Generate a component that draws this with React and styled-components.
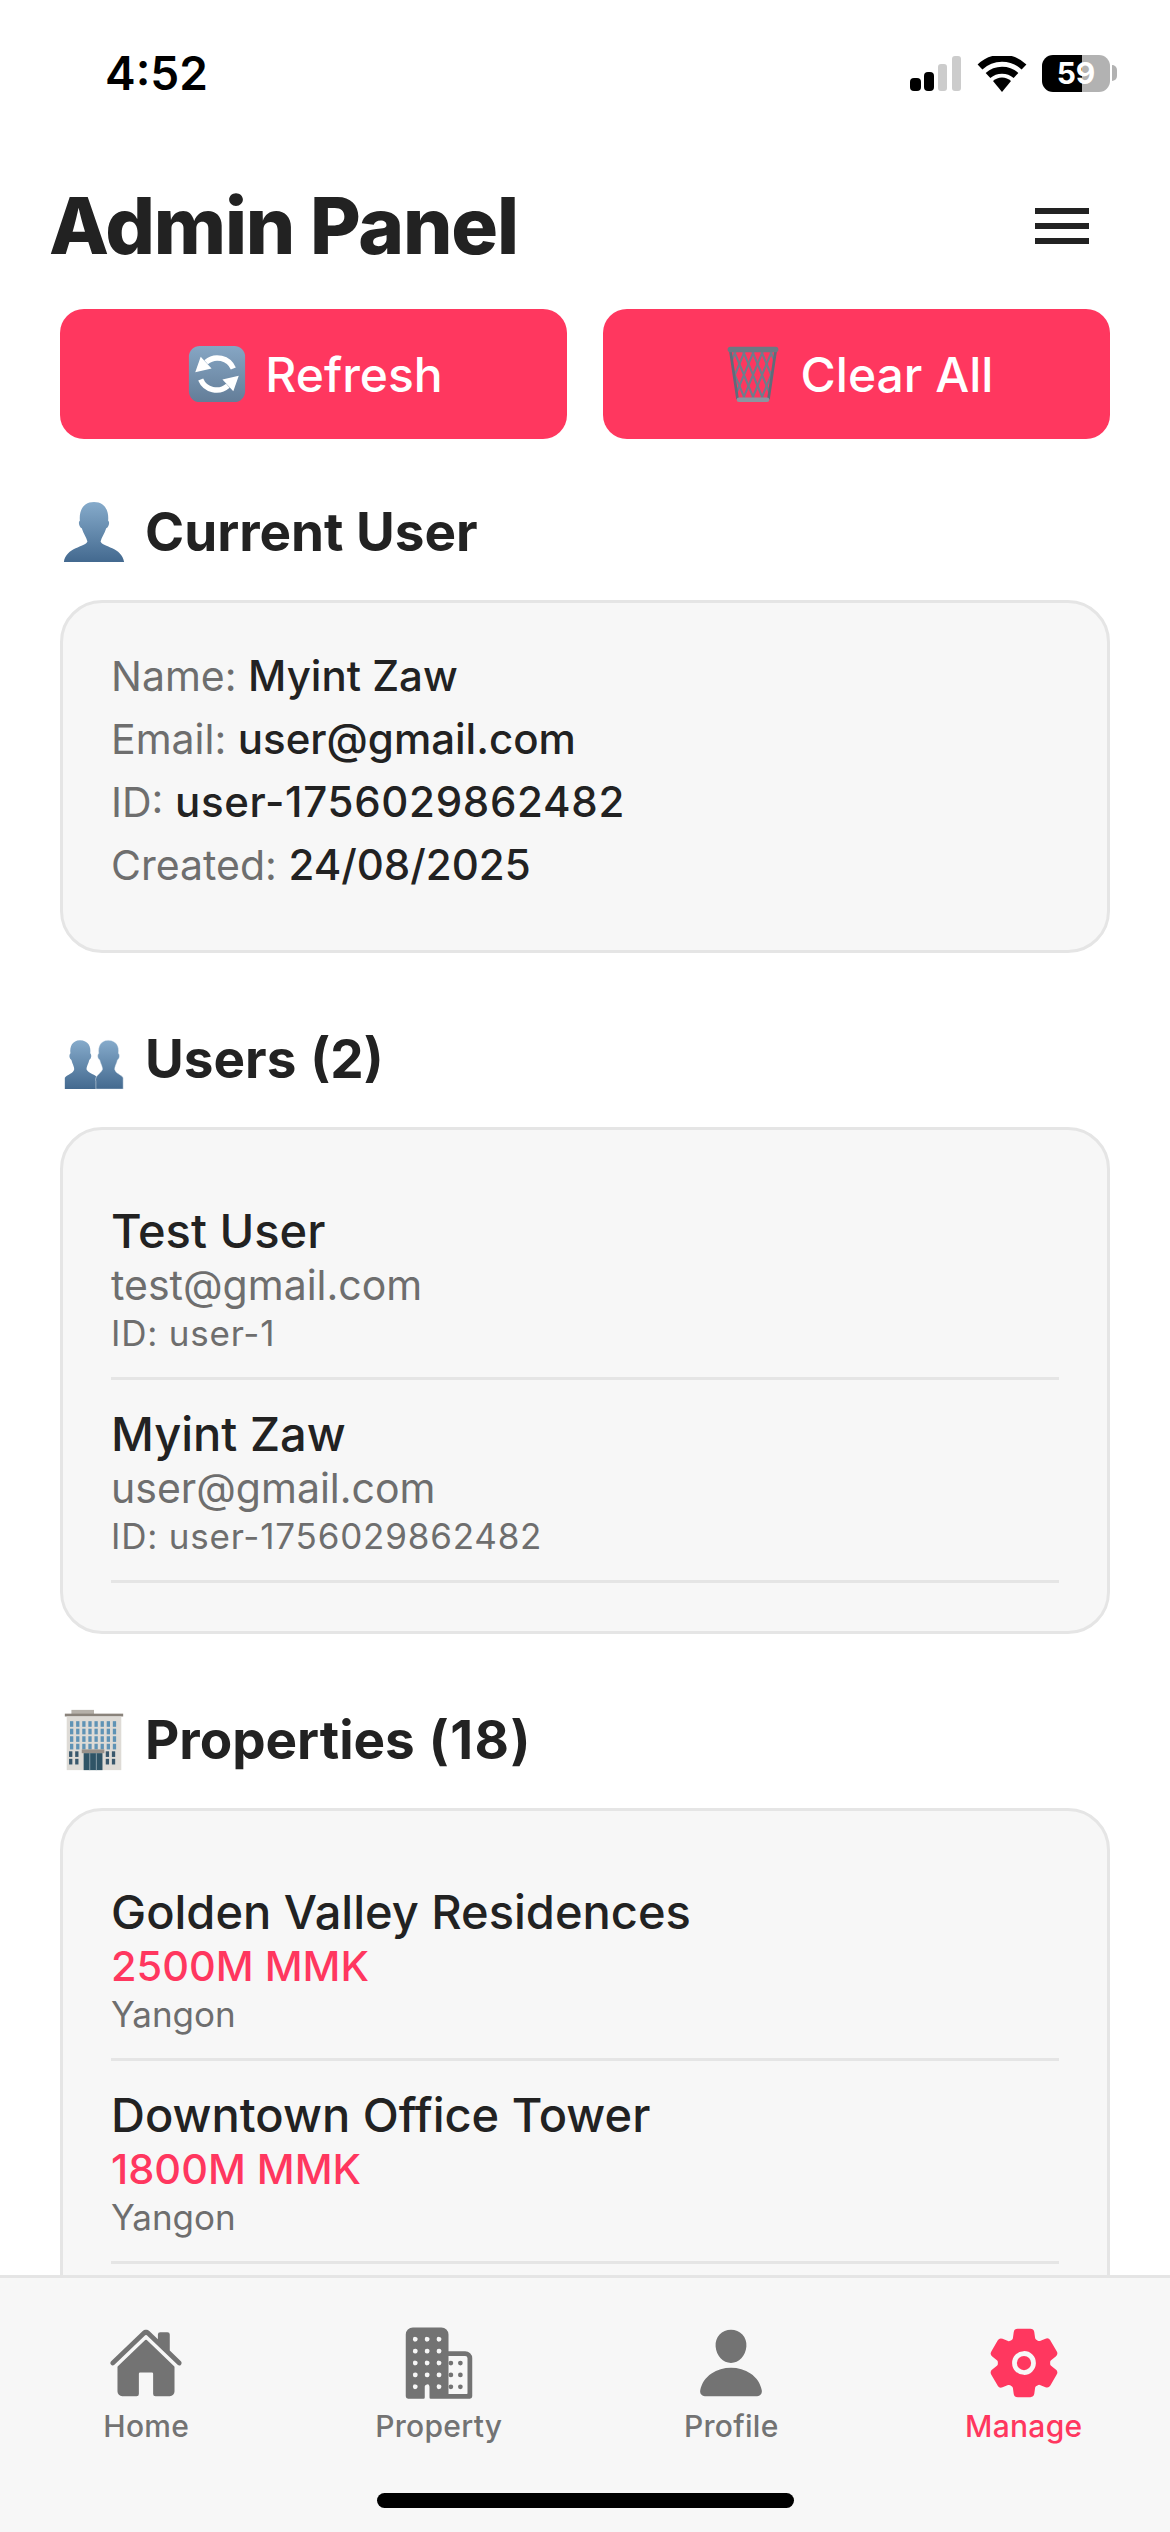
import React from 'react';
import styled, { createGlobalStyle } from 'styled-components';
import { IoHome, IoBusiness, IoPerson, IoSettings } from 'react-icons/io5';

const GlobalStyle = createGlobalStyle`
  html, body {
    margin: 0;
    padding: 0;
    background: #ffffff;
    font-family: Inter, "Liberation Sans", sans-serif;
  }
`;

const Screen = styled.div`
  width: 1170px;
  height: 2532px;
  display: flex;
  flex-direction: column;
  overflow: hidden;
  background: #ffffff;
  color: #222222;
`;

const StatusBar = styled.div`
  height: 146px;
  flex: none;
  box-sizing: border-box;
  padding: 50px 60px 0 105px;
  display: flex;
  justify-content: space-between;
  align-items: flex-start;
`;

const Time = styled.div`
  font-size: 46px;
  line-height: 46px;
  font-weight: 600;
  color: #000000;
`;

const StatusIcons = styled.div`
  display: flex;
  align-items: center;
  gap: 15px;
  margin-top: 5px;
`;

const Battery = styled.div`
  position: relative;
  width: 68px;
  height: 37px;
  border-radius: 11px;
  background: linear-gradient(90deg, #000000 0, #000000 40px, #b2b2b2 40px);
  color: #ffffff;
  font-size: 30px;
  font-weight: 700;
  line-height: 37px;
  text-align: center;

  &::after {
    content: '';
    position: absolute;
    right: -7px;
    top: 10px;
    width: 5px;
    height: 16px;
    border-radius: 0 8px 8px 0;
    background: #b2b2b2;
  }
`;

const Header = styled.div`
  flex: none;
  height: 163px;
  box-sizing: border-box;
  padding: 0 81px 4px 49px;
  display: flex;
  justify-content: space-between;
  align-items: center;
`;

const Title = styled.h1`
  margin: 0;
  font-size: 78px;
  line-height: 80px;
  font-weight: 800;
  letter-spacing: -1.2px;
  color: #222222;
`;

const MenuButton = styled.div`
  width: 54px;
  display: flex;
  flex-direction: column;
  gap: 9px;
`;

const MenuBar = styled.span`
  display: block;
  height: 6px;
  background: #222222;
`;

const Content = styled.div`
  flex: 1;
  min-height: 0;
  overflow: hidden;
  padding: 0 60px;
`;

const Actions = styled.div`
  display: flex;
  gap: 36px;
  margin-bottom: 66px;
`;

const ActionButton = styled.div`
  flex: 1;
  height: 130px;
  box-sizing: border-box;
  padding-left: 4px;
  border-radius: 24px;
  background: #ff375f;
  color: #ffffff;
  font-size: 48px;
  font-weight: 500;
  display: flex;
  align-items: center;
  justify-content: center;
  gap: 19px;

  svg {
    width: 58px;
    height: 58px;
  }
`;

const Section = styled.section`
  margin-bottom: 79px;
`;

const SectionTitle = styled.h2`
  margin: 0 0 41px;
  height: 54px;
  display: flex;
  align-items: center;
  gap: 19px;
  font-size: 53px;
  line-height: 54px;
  font-weight: 700;
  color: #222222;

  svg {
    width: 64px;
    height: 64px;
    margin-left: 2px;
    flex: none;
  }
`;

const Count = styled.span`
  letter-spacing: ${(props) => (props.$wide ? '1.500px' : '0')};
  margin-left: 14px;
`;

const Card = styled.div`
  box-sizing: border-box;
  border: 3px solid #e5e5e5;
  border-radius: 42px;
  background: #f7f7f7;
  padding: ${(props) => (props.$list ? '47px 48px 48px' : '42px 48px 53px')};
`;

const InfoLine = styled.div`
  height: 63px;
  font-size: 41px;
  line-height: 63px;
  color: #6e6e6e;

  b {
    font-size: 42px;
    line-height: 1;
    font-weight: 550;
    color: #222222;
    letter-spacing: ${(props) => (props.$wide ? '0.700px' : '0')};
  }
`;

const Row = styled.div`
  padding: 26px 0 22px;
  border-bottom: 3px solid #e5e5e5;
`;

const RowName = styled.div`
  font-size: 47px;
  line-height: 56px;
  font-weight: 550;
  color: #222222;
`;

const RowMain = styled.div`
  font-size: ${(props) => (props.$accent ? '41.500px' : '41px')};
  line-height: 52px;
  color: ${(props) => (props.$accent ? '#ff375f' : '#6e6e6e')};
  font-weight: ${(props) => (props.$accent ? 500 : 400)};
`;

const RowMeta = styled.div`
  font-size: 35px;
  line-height: 44px;
  color: #6e6e6e;
  letter-spacing: ${(props) => (props.$wide ? '0.800px' : '0')};
`;

const TabBar = styled.nav`
  flex: none;
  height: 257px;
  box-sizing: border-box;
  position: relative;
  border-top: 3px solid #e5e5e5;
  background: #f7f7f7;
  display: grid;
  grid-template-columns: repeat(4, 1fr);
`;

const Tab = styled.div`
  padding-top: 47px;
  display: flex;
  flex-direction: column;
  align-items: center;
  color: ${(props) => (props.$active ? '#ff375f' : '#737373')};
  font-size: 30px;
  line-height: 36px;
  font-weight: 500;
  letter-spacing: 0.3px;

  svg {
    width: 76px;
    height: 76px;
    margin-bottom: 7px;
  }
`;

const HomeIndicator = styled.div`
  position: absolute;
  left: 377px;
  bottom: 24px;
  width: 417px;
  height: 15px;
  border-radius: 8px;
  background: #000000;
`;

const SignalIcon = () => (
  <svg width="52" height="36" viewBox="0 0 52 36">
    <rect x="0" y="22" width="11" height="13" rx="4" fill="#000" />
    <rect x="14" y="16" width="10" height="19" rx="4" fill="#000" />
    <rect x="28" y="8" width="9" height="27" rx="3" fill="#ccc" />
    <rect x="42" y="0" width="9" height="35" rx="3" fill="#ccc" />
  </svg>
);

const WifiIcon = () => (
  <svg width="50" height="36" viewBox="0 0 50 36">
    <path d="M3 11 A32 32 0 0 1 47 11" fill="none" stroke="#000" strokeWidth="7" />
    <path d="M11 19.500 A21 21 0 0 1 39 19.500" fill="none" stroke="#000" strokeWidth="7" />
    <path d="M16 25 A13 13 0 0 1 34 25 L25 36 Z" fill="#000" />
  </svg>
);

const RefreshEmoji = () => (
  <svg viewBox="0 0 64 64">
    <defs>
      <linearGradient id="refreshBg" x1="0" y1="0" x2="0" y2="1">
        <stop offset="0" stopColor="#86a6c4" />
        <stop offset="1" stopColor="#637d98" />
      </linearGradient>
    </defs>
    <rect x="1" y="1" width="62" height="62" rx="12" fill="url(#refreshBg)" />
    <path d="M50 26 A19 19 0 0 0 20 19" fill="none" stroke="#fff" strokeWidth="6" />
    <polygon points="8,30 14,13 26,26" fill="#fff" />
    <path d="M14 38 A19 19 0 0 0 44 45" fill="none" stroke="#fff" strokeWidth="6" />
    <polygon points="56,34 50,51 38,38" fill="#fff" />
  </svg>
);

const hatchOffsets = [-40, -30, -20, -10, 0, 10, 20, 30, 40, 50, 60];

const TrashEmoji = () => (
  <svg viewBox="0 0 64 64">
    <defs>
      <clipPath id="basketShape">
        <path d="M7 6 H57 L49 60 H15 Z" />
      </clipPath>
    </defs>
    <g clipPath="url(#basketShape)" fill="none" stroke="#6f7c8c" strokeWidth="2.300">
      {hatchOffsets.map((d) => (
        <path key={d} d={`M${d} 4 L${d + 24} 62 M${d + 24} 4 L${d} 62`} />
      ))}
    </g>
    <path d="M7 6 L15 60 M57 6 L49 60" fill="none" stroke="#5f6c7a" strokeWidth="3" />
    <rect x="4" y="2" width="56" height="6" rx="3" fill="#6c7883" />
    <rect x="14" y="58" width="36" height="5" rx="2.500" fill="#8b96a0" />
  </svg>
);

const PersonEmoji = () => (
  <svg viewBox="0 0 68 68">
    <defs>
      <linearGradient id="bustFill" x1="0" y1="0" x2="0" y2="1">
        <stop offset="0" stopColor="#86abcb" />
        <stop offset="1" stopColor="#43698f" />
      </linearGradient>
    </defs>
    <path
      d="M34 2 C46 2 50 12 49 22 C51 23 50 29 47 30 C45 36 42 40 41 44 C43 50 64 50 66 66 L2 66 C4 50 25 50 27 44 C26 40 23 36 21 30 C18 29 17 23 19 22 C18 12 22 2 34 2 Z"
      fill="url(#bustFill)"
    />
  </svg>
);

const BustsEmoji = () => (
  <svg viewBox="0 0 68 68">
    <defs>
      <linearGradient id="bustsFill" x1="0" y1="0" x2="0" y2="1">
        <stop offset="0" stopColor="#86abcb" />
        <stop offset="1" stopColor="#43698f" />
      </linearGradient>
    </defs>
    <path
      d="M19 14 C28 14 31 21 30 28 C32 30 31 34 29 35 C28 39 26 42 26 45 C28 50 36 50 38 55 L38 66 L3 66 L3 54 C6 50 12 50 13 45 C13 42 11 39 10 35 C8 34 7 30 9 28 C8 21 11 14 19 14 Z"
      fill="url(#bustsFill)"
    />
    <path
      d="M49 14 C58 14 61 21 60 28 C62 30 61 34 59 35 C58 39 56 42 56 45 C57 50 63 50 65 54 L65 66 L36 66 L36 58 C34 52 41 50 43 45 C43 42 41 39 40 35 C38 34 37 30 39 28 C38 21 41 14 49 14 Z"
      fill="url(#bustsFill)"
      stroke="#f0f4f8"
      strokeWidth="0.500"
    />
  </svg>
);

const windowCols = [8, 14.500, 21, 27.500, 34, 40.500, 47, 53.500];
const windowRows = [14, 22, 30, 38];

const BuildingEmoji = () => (
  <svg viewBox="0 0 68 68">
    <rect x="10" y="2" width="24" height="5" fill="#b5b0a9" />
    <rect x="3" y="6" width="62" height="3" fill="#8a837b" />
    <rect x="5" y="9" width="58" height="57" fill="#dedbd6" />
    {windowRows.map((y) =>
      windowCols.map((x) => <rect key={`${x}-${y}`} x={x + 0.500} y={y} width="3.500" height="6" fill="#5f93b5" />)
    )}
    {[8, 14.500, 47, 53.500].map((x) =>
      [46, 54].map((y) => <rect key={`${x}-${y}`} x={x - 0.500} y={y} width="3.500" height="6" fill="#39586c" />)
    )}
    <rect x="21" y="44" width="24" height="4" fill="#98918a" />
    <rect x="23" y="48" width="20" height="18" fill="#2f5466" />
    <path d="M29.500 48 V66 M36.500 48 V66" stroke="#8fa3ad" strokeWidth="1" />
  </svg>
);

const users = [
  { name: 'Test User', email: 'test@gmail.com', id: 'user-1' },
  { name: 'Myint Zaw', email: 'user@gmail.com', id: 'user-1756029862482' },
];

const properties = [
  { name: 'Golden Valley Residences', price: '2500M MMK', city: 'Yangon' },
  { name: 'Downtown Office Tower', price: '1800M MMK', city: 'Yangon' },
];

const tabs = [
  { label: 'Home', Icon: IoHome },
  { label: 'Property', Icon: IoBusiness },
  { label: 'Profile', Icon: IoPerson },
  { label: 'Manage', Icon: IoSettings, active: true },
];

const App = () => {
  return (
    <>
      <GlobalStyle />
      <Screen>
        <StatusBar>
          <Time>4:52</Time>
          <StatusIcons>
            <SignalIcon />
            <WifiIcon />
            <Battery>59</Battery>
          </StatusIcons>
        </StatusBar>

        <Header>
          <Title>Admin Panel</Title>
          <MenuButton>
            <MenuBar />
            <MenuBar />
            <MenuBar />
          </MenuButton>
        </Header>

        <Content>
          <Actions>
            <ActionButton>
              <RefreshEmoji />
              Refresh
            </ActionButton>
            <ActionButton>
              <TrashEmoji />
              Clear All
            </ActionButton>
          </Actions>

          <Section>
            <SectionTitle>
              <PersonEmoji />
              Current User
            </SectionTitle>
            <Card>
              <InfoLine>Name: <b>Myint Zaw</b></InfoLine>
              <InfoLine>Email: <b>user@gmail.com</b></InfoLine>
              <InfoLine $wide>ID: <b>user-1756029862482</b></InfoLine>
              <InfoLine>Created: <b>24/08/2025</b></InfoLine>
            </Card>
          </Section>

          <Section>
            <SectionTitle>
              <BustsEmoji />
              <span>Users<Count>(2)</Count></span>
            </SectionTitle>
            <Card $list>
              {users.map((user) => (
                <Row key={user.id}>
                  <RowName>{user.name}</RowName>
                  <RowMain>{user.email}</RowMain>
                  <RowMeta $wide>ID: {user.id}</RowMeta>
                </Row>
              ))}
            </Card>
          </Section>

          <Section>
            <SectionTitle>
              <BuildingEmoji />
              <span>Properties<Count $wide>(18)</Count></span>
            </SectionTitle>
            <Card $list>
              {properties.map((property) => (
                <Row key={property.name}>
                  <RowName>{property.name}</RowName>
                  <RowMain $accent>{property.price}</RowMain>
                  <RowMeta>{property.city}</RowMeta>
                </Row>
              ))}
            </Card>
          </Section>
        </Content>

        <TabBar>
          {tabs.map(({ label, Icon, active }) => (
            <Tab key={label} $active={active}>
              <Icon />
              {label}
            </Tab>
          ))}
          <HomeIndicator />
        </TabBar>
      </Screen>
    </>
  );
};

export default App;
